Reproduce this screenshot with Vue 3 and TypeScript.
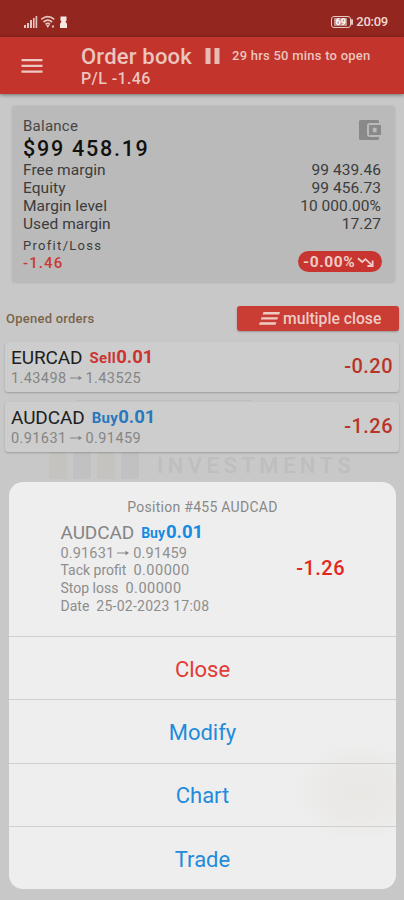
<script setup lang="ts">
interface Row { label: string; value: string }
interface Order { symbol: string; side: 'Sell' | 'Buy'; lots: string; from: string; to: string; profit: string }

const account: Row[] = [
  { label: 'Free margin', value: '99 439.46' },
  { label: 'Equity', value: '99 456.73' },
  { label: 'Margin level', value: '10 000.00%' },
  { label: 'Used margin', value: '17.27' },
]

const orders: Order[] = [
  { symbol: 'EURCAD', side: 'Sell', lots: '0.01', from: '1.43498', to: '1.43525', profit: '-0.20' },
  { symbol: 'AUDCAD', side: 'Buy', lots: '0.01', from: '0.91631', to: '0.91459', profit: '-1.26' },
]

const details: Row[] = [
  { label: 'Tack profit', value: '0.00000' },
  { label: 'Stop loss', value: '0.00000' },
  { label: 'Date', value: '25-02-2023 17:08' },
]

const selected = orders[1]
const actions: string[] = ['Close', 'Modify', 'Chart', 'Trade']
</script>

<template>
  <div class="screen">
    <div class="status">
      <svg class="signals" width="46" height="14" viewBox="0 0 46 14">
        <g fill="#e3c6c2">
          <rect x="0" y="10" width="2" height="3" />
          <rect x="3" y="8" width="2" height="5" />
          <rect x="6" y="5" width="2" height="8" />
          <rect x="9" y="3" width="1.6" height="10" />
          <rect x="11.6" y="1" width="1.6" height="12" />
        </g>
        <g fill="none" stroke="#e3c6c2" stroke-width="1.7">
          <path d="M17.300 4.400Q23.800 -1 30.300 4.400" />
          <path d="M19.500 7Q23.800 3.400 28.100 7" />
          <path d="M21.500 9.400Q23.800 7.500 26.100 9.400" />
        </g>
        <path d="M22 10h3.600L23.800 13z" fill="#e3c6c2" />
        <path d="M28 10.500h2v2h-2z" fill="#e3c6c2" />
        <path d="M36.500 1.500h6v4l-1 1.200 1.500 2V13h-7V8.700l1.500-2-1-1.200z" fill="#f6e6e2" />
      </svg>
      <div class="status-right">
        <span class="battery"><span class="level">69</span></span>
        <span class="clock">20:09</span>
      </div>
    </div>

    <header class="appbar">
      <svg class="menu" width="22" height="16" viewBox="0 0 22 16" fill="#ebc8c1">
        <path d="M.5 1h21v2.200H.5zM.5 6.700h21v2.200H.5zM.5 12.500h21v2.200H.5z" />
      </svg>
      <div class="heading">
        <div class="heading-line">
          <h1>Order book</h1>
          <svg class="pause" width="15" height="16" viewBox="0 0 15 16" fill="#e6bcb5">
            <path d="M.5 0h5v16h-5zM9.500 0h5v16h-5z" />
          </svg>
          <span class="opens">29 hrs 50 mins to open</span>
        </div>
        <div class="pl">P/L -1.46</div>
      </div>
    </header>

    <main class="content">
      <section class="balance">
        <div class="balance-top">
          <div>
            <div class="label">Balance</div>
            <div class="amount">$99 458.19</div>
          </div>
          <svg class="wallet" width="22" height="20" viewBox="0 0 22 20">
            <path d="M1.500 0H18.500Q20 0 20 1.500V3H11Q8 3 8 6V14Q8 17 11 17H20V18.500Q20 20 18.500 20H1.500Q0 20 0 18.500V1.500Q0 0 1.500 0z" fill="#898989" />
            <path fill-rule="evenodd" d="M10 5h12v10H10zM13.800 7.800v4.400h3.800V7.800z" fill="#898989" />
          </svg>
        </div>
        <div v-for="row in account" :key="row.label" class="row">
          <span>{{ row.label }}</span><span>{{ row.value }}</span>
        </div>
        <div class="balance-foot">
          <div>
            <div class="pl-label">Profit/Loss</div>
            <div class="pl-value">-1.46</div>
          </div>
          <div class="pill">
            <span>-0.00%</span>
            <svg width="18" height="12" viewBox="0 0 19 12" fill="none" stroke="#efcbc6" stroke-width="1.900">
              <path d="M1 2l4.500 4 3.500-3 6.800 6.500M16.500 4.500v5.700h-5.500" />
            </svg>
          </div>
        </div>
      </section>

      <div class="orders-head">
        <span class="orders-title">Opened orders</span>
        <button class="multi">
          <svg width="21" height="13" viewBox="0 0 21 13" fill="#efcbc6">
            <path d="M4.500 0H21l-.8 2.400H3.700zM2.600 5.200h16.500l-.8 2.400H1.800zM.8 10.300h16.500l-.8 2.400H0z" />
          </svg>
          <span>multiple close</span>
        </button>
      </div>

      <div class="orders">
        <div class="watermark">
          <i></i><i></i><i></i><i></i><span>INVESTMENTS</span>
        </div>
        <article v-for="order in orders" :key="order.symbol" class="order">
          <div>
            <div class="order-line">
              <span class="symbol">{{ order.symbol }}</span>
              <span class="trade" :class="order.side.toLowerCase()"><small>{{ order.side }}</small><b>{{ order.lots }}</b></span>
            </div>
            <div class="prices">
              <span>{{ order.from }}</span>
              <svg class="arrow" width="12" height="6" viewBox="0 0 12 6"><path d="M0 2.400h8.500V.7L12 3 8.500 5.300V3.600H0z" /></svg>
              <span>{{ order.to }}</span>
            </div>
          </div>
          <span class="profit">{{ order.profit }}</span>
        </article>
      </div>
    </main>

    <div class="sheet">
      <div class="sheet-head">
        <div class="sheet-title">Position #455 AUDCAD</div>
        <div class="sheet-body">
          <div>
            <div class="order-line">
              <span class="symbol">{{ selected.symbol }}</span>
              <span class="trade buy"><small>{{ selected.side }}</small><b>{{ selected.lots }}</b></span>
            </div>
            <div class="prices">
              <span>{{ selected.from }}</span>
              <svg class="arrow" width="12" height="6" viewBox="0 0 12 6"><path d="M0 2.400h8.500V.7L12 3 8.500 5.300V3.600H0z" /></svg>
              <span>{{ selected.to }}</span>
            </div>
            <div v-for="item in details" :key="item.label" class="detail">
              <span>{{ item.label }}</span><span :class="{ price: item.label !== 'Date' }">{{ item.value }}</span>
            </div>
          </div>
          <span class="profit">{{ selected.profit }}</span>
        </div>
      </div>
      <button v-for="action in actions" :key="action" class="action" :class="{ danger: action === 'Close' }">{{ action }}</button>
    </div>
  </div>
</template>

<style>
body { margin: 0; background: #c8c8c8; }
</style>

<style scoped>
.screen {
  position: relative;
  width: 404px;
  height: 900px;
  overflow: hidden;
  background: #c8c8c8;
  font-family: Roboto, "Liberation Sans", sans-serif;
  color: #3c3c3c;
}
button { border: 0; padding: 0; font-family: inherit; }
.status {
  box-sizing: border-box;
  height: 37px;
  padding: 15px 16px 0 24px;
  display: flex;
  justify-content: space-between;
  align-items: flex-start;
  background: #93261f;
}
.status-right { display: flex; align-items: center; gap: 4px; height: 14px; }
.battery {
  position: relative;
  box-sizing: border-box;
  width: 20px;
  height: 12px;
  padding: 1px;
  border: 1.500px solid #e6c6c1;
  border-radius: 3px;
}
.battery::after {
  content: "";
  position: absolute;
  right: -3px;
  top: 2px;
  width: 2px;
  height: 6px;
  border-radius: 1px;
  background: #e6c6c1;
}
.level {
  display: block;
  height: 8px;
  width: 13px;
  margin-left: 1px;
  background: #c58f89;
  color: #fff;
  font-size: 9px;
  line-height: 9px;
  font-weight: 700;
  text-align: center;
}
.clock { font-size: 13px; font-weight: 500; line-height: 14px; color: #efd9d5; letter-spacing: -0.25px; margin-left: 1px; }
.appbar {
  position: relative;
  box-sizing: border-box;
  height: 57px;
  padding: 7px 0 0 21px;
  display: flex;
  background: #c3342c;
  box-shadow: 0 1px 4px rgba(0, 0, 0, 0.45);
}
.menu { margin-top: 14px; }
.heading { margin-left: 38px; color: #ebc5be; }
.heading-line { display: flex; align-items: center; height: 25px; }
h1 { margin: 0; font-size: 22px; line-height: 25px; font-weight: 500; width: 111px; white-space: nowrap; letter-spacing: 0.2px; }
.pause { margin-left: 13px; margin-top: -2px; }
.opens { margin-left: 12px; margin-top: -2px; font-size: 13px; font-weight: 500; white-space: nowrap; letter-spacing: 0.240px; }
.pl { margin-top: 1px; font-size: 16px; line-height: 18px; font-weight: 500; letter-spacing: 0.400px; }
.content { padding: 12px 5px 0 5px; }
.balance {
  box-sizing: border-box;
  height: 177px;
  margin: 0 4px 0 7px;
  padding: 10px 14px 0 11px;
  border-radius: 3px;
  background: #bababa;
  box-shadow: 0 0 2px rgba(120, 120, 120, 0.25);
}
.balance-top { display: flex; justify-content: space-between; height: 45px; }
.label { font-size: 15px; line-height: 20px; color: #464646; letter-spacing: 0.250px; }
.amount { font-size: 21.500px; line-height: 25px; font-weight: 500; color: #111; letter-spacing: 1.750px; }
.wallet { margin-top: 4px; }
.row { display: flex; justify-content: space-between; font-size: 15.500px; line-height: 18px; letter-spacing: 0.060px; }
.balance-foot { display: flex; justify-content: space-between; margin-top: 4px; }
.pl-label { font-size: 13px; line-height: 17px; letter-spacing: 1.300px; }
.pl-value { font-size: 15px; line-height: 18px; font-weight: 500; letter-spacing: 1.100px; color: #ca3935; }
.pill {
  box-sizing: border-box;
  width: 84px;
  height: 21px;
  margin: 14px -1px 0 0;
  padding-left: 5px;
  display: flex;
  align-items: center;
  gap: 2px;
  border-radius: 11px;
  background: #c83430;
  color: #efcbc6;
  font-size: 15.500px;
  font-weight: 700;
  letter-spacing: 0.600px;
}
.orders-head { display: flex; justify-content: space-between; align-items: center; margin-top: 22px; height: 27px; }
.orders-title { margin-left: 1px; font-size: 13px; font-weight: 500; color: #7a6448; letter-spacing: 0.240px; }
.multi {
  width: 162px;
  height: 25px;
  display: flex;
  align-items: center;
  padding-left: 22px;
  gap: 3px;
  border-radius: 3px;
  background: #c93d35;
  color: #efcbc6;
  font-size: 15.700px;
  font-weight: 500;
  box-shadow: 0 1px 2px rgba(0, 0, 0, 0.25);
}
.orders { position: relative; padding-top: 10px; }
.order {
  position: relative;
  box-sizing: border-box;
  height: 50px;
  margin-bottom: 10px;
  padding: 3px 6px 0 6px;
  display: flex;
  justify-content: space-between;
  border-radius: 3px;
  background: #cdcdcd;
  box-shadow: 0 1px 2px rgba(0, 0, 0, 0.22);
}
.order:last-child::before {
  content: "";
  position: absolute;
  left: 70px;
  top: -2px;
  width: 178px;
  height: 1px;
  background: #bfbfbf;
}
.order-line { display: flex; align-items: center; height: 24px; }
.symbol { font-size: 19px; color: #202020; letter-spacing: -0.100px; }
.trade { margin-left: 7px; display: flex; align-items: baseline; font-weight: 700; }
.trade small { font-size: 15px; letter-spacing: 0.350px; }
.trade b { font-size: 18.500px; font-weight: 700; letter-spacing: 0; }
.sell { color: #ca3531; }
.buy { color: #2878bd; }
.prices { display: flex; align-items: center; height: 18px; font-size: 14.500px; color: #858585; letter-spacing: 0.400px; }
.arrow { margin: 0 4px 0 3px; fill: #858585; }
.profit { font-size: 20px; font-weight: 500; color: #b9352b; letter-spacing: 0.450px; }
.order .profit { line-height: 43px; }
.watermark { position: absolute; left: 44px; top: 119px; display: flex; gap: 6px; align-items: center; color: #bebebe; }
.watermark i { width: 18px; height: 28px; background: #c1c1c1; }
.watermark i:nth-child(odd) { background: #c5c3bf; }
.watermark span { margin-left: 12px; font-size: 22px; font-weight: 500; letter-spacing: 4.500px; }
.sheet {
  position: absolute;
  left: 9px;
  top: 482px;
  width: 387px;
  height: 407px;
  border-radius: 14px;
  overflow: hidden;
  background: radial-gradient(ellipse 65px 52px at 350px 310px, #e9e8e5 0%, #eae9e7 45%, #eeeeee 100%);
}
.sheet-head { box-sizing: border-box; height: 154px; padding-top: 16px; }
.sheet-title { font-size: 14px; line-height: 18px; text-align: center; color: #888; letter-spacing: 0.270px; }
.sheet-body { display: flex; justify-content: space-between; padding: 4px 51px 0 51.500px; }
.sheet .symbol { color: #858585; }
.sheet .trade { margin-left: 7px; }
.sheet .trade small { font-size: 14px; letter-spacing: 0; }
.sheet .trade b { margin-left: 1px; }
.sheet .buy { color: #168be3; }
.sheet .prices { color: #909090; letter-spacing: 0.150px; }
.sheet .profit { color: #e42520; margin-top: 35px; line-height: 26px; }
.detail { display: flex; gap: 7px; font-size: 14px; line-height: 17.800px; color: #8d8d8d; }
.detail span:last-child { letter-spacing: 0.250px; }
.detail .price:last-child { font-size: 14.500px; letter-spacing: 0.500px; }
.action {
  box-sizing: border-box;
  display: block;
  width: 387px;
  height: 63.300px;
  padding-top: 2px;
  border-top: 1px solid #d2d0cf;
  background: transparent;
  color: #228bdc;
  font-size: 22px;
  text-align: center;
}
.danger { color: #e23a34; }
</style>
